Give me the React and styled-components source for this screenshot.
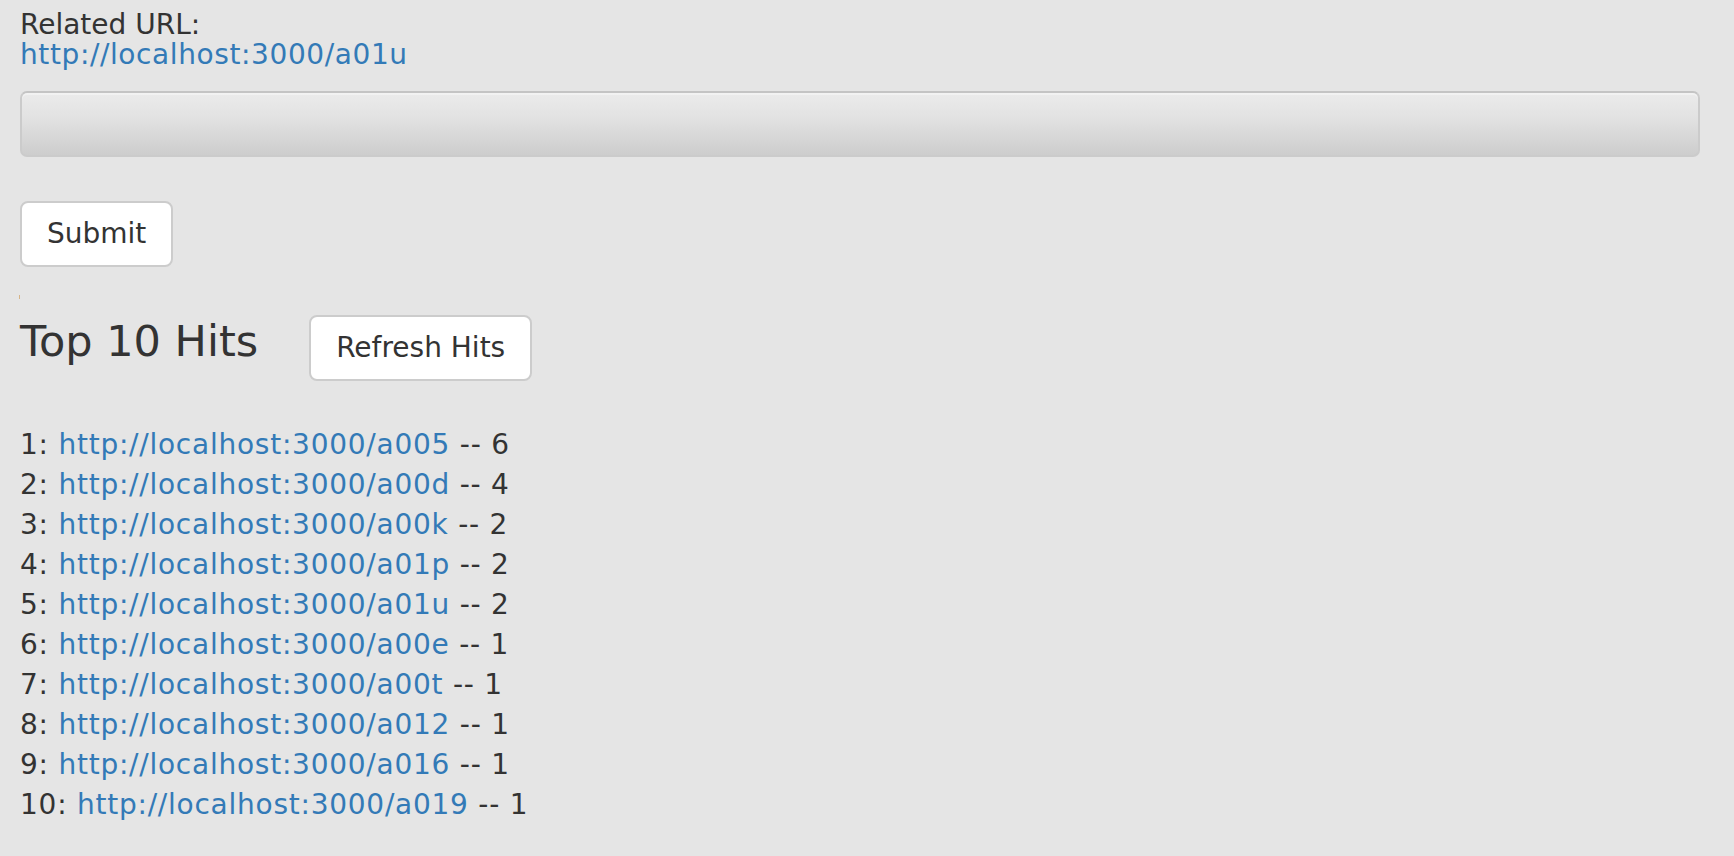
import React from 'react';
import styled, { createGlobalStyle } from 'styled-components';

const GlobalStyle = createGlobalStyle`
  html, body {
    margin: 0;
    padding: 0;
    background-color: #e5e5e5;
  }

  body {
    font-family: "DejaVu Sans", Verdana, sans-serif;
    font-size: 28px;
    line-height: 40px;
    color: #333333;
  }
`;

const Page = styled.div`
  width: 1734px;
  min-height: 856px;
  box-sizing: border-box;
  padding: 10px 34px 0 20px;
`;

const RelatedBlock = styled.div`
  line-height: 30px;
`;

const Label = styled.div`
  color: #333333;
`;

const Link = styled.a`
  color: #337ab7;
  text-decoration: none;
  letter-spacing: ${(p) => p.$spacing || 'inherit'};
`;

const UrlInput = styled.input`
  display: block;
  box-sizing: border-box;
  width: 1680px;
  height: 66px;
  margin: 21px 0 0;
  border: 2px solid #cbcbcb;
  border-top-color: #c4c4c4;
  border-radius: 7px;
  background: linear-gradient(to bottom, #ebebeb 0%, #e2e2e2 40%, #cdcdcd 100%);
  box-shadow: inset 0 2px 0 rgba(255, 255, 255, 0.35);
  font: inherit;
  padding: 0 16px;
  outline: none;
`;

const Button = styled.button`
  display: inline-block;
  box-sizing: border-box;
  height: 66px;
  padding: 11px 25px;
  border: 2px solid #cccccc;
  border-radius: 8px;
  background-color: #ffffff;
  color: #333333;
  font-family: "DejaVu Sans", Verdana, sans-serif;
  font-size: 28px;
  line-height: 40px;
  cursor: pointer;
`;

const SubmitRow = styled.div`
  margin-top: 44px;
  display: flex;
`;

const Tick = styled.span`
  display: block;
  width: 1px;
  height: 4px;
  margin: 28px 0 0 -1px;
  background-color: #d6b488;
`;

const HitsHeader = styled.div`
  display: flex;
  align-items: flex-start;
  gap: 51px;
  margin-top: 16px;
`;

const Heading = styled.h3`
  margin: 2px 0 0;
  font-size: 43px;
  line-height: 48px;
  font-weight: normal;
  color: #333333;
`;

const HitList = styled.div`
  margin-top: 44px;
  letter-spacing: 0.75px;
`;

const HitRow = styled.div`
  height: 40px;
  white-space: nowrap;
`;

const hits = [
  ['a005', 6],
  ['a00d', 4],
  ['a00k', 2],
  ['a01p', 2],
  ['a01u', 2],
  ['a00e', 1],
  ['a00t', 1],
  ['a012', 1],
  ['a016', 1],
  ['a019', 1],
];

const App = () => {
  return (
    <>
      <GlobalStyle />
      <Page>
        <RelatedBlock>
          <Label>Related URL:</Label>
          <Link $spacing="0.6px" href="#">http://localhost:3000/a01u</Link>
        </RelatedBlock>
        <UrlInput type="text" />
        <SubmitRow>
          <Button type="button">Submit</Button>
        </SubmitRow>
        <Tick />
        <HitsHeader>
          <Heading>Top 10 Hits</Heading>
          <Button type="button">Refresh Hits</Button>
        </HitsHeader>
        <HitList>
          {hits.map(([code, count], i) => (
            <HitRow key={code}>
              {i + 1}: <Link href="#">http://localhost:3000/{code}</Link> -- {count}
            </HitRow>
          ))}
        </HitList>
      </Page>
    </>
  );
};

export default App;
